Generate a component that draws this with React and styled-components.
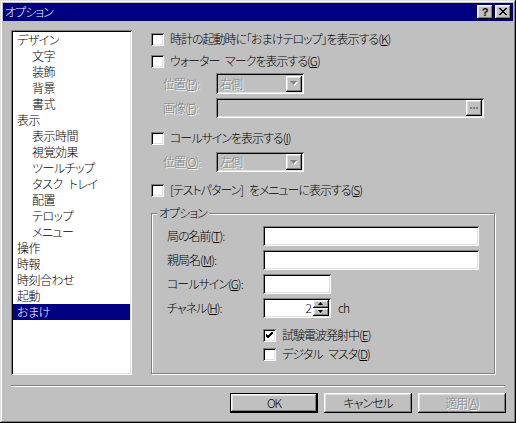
import React from 'react';
import styled, { createGlobalStyle, css } from 'styled-components';

const face = '#c0c0c0';
const shadow = '#808080';
const light = '#dfdfdf';
const navy = '#000080';

const GlobalStyle = createGlobalStyle`
  html, body {
    margin: 0;
    padding: 0;
    background: ${face};
  }
  body {
    font-family: "Noto Sans CJK JP", "Liberation Sans", sans-serif;
    font-size: 12px;
    font-weight: 300;
    line-height: 14px;
    letter-spacing: -1px;
    word-spacing: 4px;
    font-feature-settings: "palt";
    color: #000;
  }
  * { box-sizing: border-box; }
  u { text-underline-offset: 1px; }
`;

// win98 bevels
const raised = css`
  background: ${face};
  box-shadow: inset -1px -1px 0 #000, inset 1px 1px 0 #fff,
    inset -2px -2px 0 ${shadow}, inset 2px 2px 0 ${light};
`;

const sunken = css`
  box-shadow: inset 1px 1px 0 ${shadow}, inset -1px -1px 0 #fff,
    inset 2px 2px 0 #000, inset -2px -2px 0 ${light};
`;

const disabledText = css`
  color: ${shadow};
  text-shadow: 1px 1px 0 #fff;
`;

const Window = styled.div`
  display: flex;
  flex-direction: column;
  width: 516px;
  height: 423px;
  padding: 3px;
  background: ${face};
  box-shadow: inset -1px -1px 0 #000, inset 1px 1px 0 ${light},
    inset -2px -2px 0 ${shadow}, inset 2px 2px 0 #fff;
`;

const TitleBar = styled.div`
  display: flex;
  align-items: center;
  height: 18px;
  padding: 0 2px;
  background: ${navy};
  color: #fff;
`;

const TitleText = styled.div`
  flex: 1;
  font-size: 12px;
`;

const CaptionButton = styled.div`
  ${raised};
  display: flex;
  align-items: center;
  justify-content: center;
  width: 16px;
  height: 14px;
  margin-left: ${p => (p.$gap ? '2px' : '0')};
  color: #000;
  font-family: "Liberation Sans", sans-serif;
  font-weight: bold;
  font-size: 11px;
  line-height: 14px;
  letter-spacing: 0;
  padding-bottom: 1px;
`;

const Body = styled.div`
  display: flex;
  margin-top: 9px;
  padding: 0 8px;
`;

const ListBox = styled.div`
  ${sunken};
  width: 121px;
  height: 345px;
  padding: 2px;
  background: #fff;
`;

const ListItem = styled.div`
  height: 16px;
  line-height: 16px;
  padding-left: ${p => (p.$level ? '19px' : '4px')};
  white-space: nowrap;
  letter-spacing: -0.5px;
  background: ${p => (p.$selected ? navy : 'transparent')};
  color: ${p => (p.$selected ? '#fff' : '#000')};
`;

const Pane = styled.div`
  display: flex;
  flex-direction: column;
  width: 345px;
  margin-left: 19px;
`;

const CheckRow = styled.div`
  display: flex;
  align-items: center;
  gap: 6px;
  height: 16px;
  margin-top: ${p => p.$mt || 0}px;
  white-space: nowrap;
`;

const Box = styled.div`
  ${sunken};
  display: flex;
  align-items: center;
  justify-content: center;
  flex: none;
  width: 13px;
  height: 13px;
  background: #fff;
`;

const FieldRow = styled.div`
  display: flex;
  align-items: center;
  height: ${p => p.$h}px;
  margin-top: ${p => p.$mt || 0}px;
  padding-left: 12px;
`;

const FieldLabel = styled.div`
  width: ${p => p.$w || 53}px;
  white-space: nowrap;
  ${p => p.$disabled && disabledText};
`;

const Combo = styled.div`
  ${sunken};
  display: flex;
  align-items: center;
  width: ${p => p.$w}px;
  height: 100%;
  padding: 2px;
  background: ${face};
`;

const ComboText = styled.div`
  flex: 1;
  padding-left: 2px;
  ${disabledText};
`;

const SmallButton = styled.div`
  ${raised};
  display: flex;
  align-items: center;
  justify-content: center;
  width: ${p => p.$w || 16}px;
  height: ${p => p.$h || 16}px;
`;

const TextField = styled.div`
  ${sunken};
  display: flex;
  align-items: center;
  justify-content: flex-end;
  width: ${p => p.$w}px;
  height: 20px;
  padding: 2px;
  background: ${p => (p.$disabled ? face : '#fff')};
`;

const GroupBox = styled.div`
  position: relative;
  width: 344px;
  height: 161px;
  margin-top: 15px;
  padding: 12px 0 0 15px;
  border: 1px solid ${shadow};
  box-shadow: 1px 1px 0 #fff, inset 1px 1px 0 #fff;
`;

const GroupTitle = styled.div`
  position: absolute;
  top: -8px;
  left: 5px;
  padding: 0 2px;
  background: ${face};
`;

const GroupGrid = styled.div`
  display: grid;
  grid-template-columns: 96px auto;
  grid-auto-rows: 20px;
  row-gap: 4px;
  align-items: center;
  justify-items: start;
`;

const SpinWrap = styled.div`
  display: flex;
  align-items: center;
  gap: 7px;
`;

const SpinValue = styled.div`
  flex: 1;
  text-align: right;
  padding-right: 2px;
`;

const SpinButtons = styled.div`
  display: flex;
  flex-direction: column;
`;

const CheckStack = styled.div`
  display: flex;
  flex-direction: column;
  gap: 3px;
  margin-top: 9px;
  padding-left: 96px;
`;

const Separator = styled.div`
  height: 2px;
  margin: 10px 8px 0;
  border-top: 1px solid ${shadow};
  border-bottom: 1px solid #fff;
`;

const ButtonBar = styled.div`
  display: flex;
  justify-content: flex-end;
  gap: 6px;
  margin-top: 6px;
  padding-right: 7px;
`;

const PushButton = styled.div`
  ${raised};
  display: flex;
  align-items: center;
  justify-content: center;
  width: 88px;
  height: 20px;
  ${p => p.$default && css`
    border: 1px solid #000;
  `};
  ${p => p.$disabled && disabledText};
`;

const Check = ({ checked }) => (
  <Box>
    {checked && (
      <svg width="7" height="7" viewBox="0 0 7 7">
        <path d="M0 2 L2 4 L7 -1 M0 3 L2 5 L7 0 M0 4 L2 6 L7 1" stroke="#000" strokeWidth="1" fill="none" shapeRendering="crispEdges" />
      </svg>
    )}
  </Box>
);

const Arrow = ({ up, disabled, w = 7 }) => {
  const h = Math.ceil(w / 2);
  const pts = up ? `0,${h} ${w},${h} ${w / 2},0` : `0,0 ${w},0 ${w / 2},${h}`;
  return (
    <svg width={w + 1} height={h + 1} viewBox={`0 0 ${w + 1} ${h + 1}`}>
      {disabled && <polygon points={pts} fill="#fff" transform="translate(1 1)" />}
      <polygon points={pts} fill={disabled ? shadow : '#000'} />
    </svg>
  );
};

const DisabledCombo = ({ value, w }) => (
  <Combo $w={w}>
    <ComboText>{value}</ComboText>
    <SmallButton>
      <Arrow disabled />
    </SmallButton>
  </Combo>
);

const treeItems = [
  ['デザイン', 0], ['文字', 1], ['装飾', 1], ['背景', 1], ['書式', 1],
  ['表示', 0], ['表示時間', 1], ['視覚効果', 1], ['ツールチップ', 1], ['タスク トレイ', 1],
  ['配置', 1], ['テロップ', 1], ['メニュー', 1],
  ['操作', 0], ['時報', 0], ['時刻合わせ', 0], ['起動', 0], ['おまけ', 0],
];

export default function App() {
  return (
    <>
      <GlobalStyle />
      <Window>
        <TitleBar>
          <TitleText>オプション</TitleText>
          <CaptionButton>?</CaptionButton>
          <CaptionButton $gap>
            <svg width="8" height="7" viewBox="0 0 8 7">
              <path d="M0 0 L7 7 M1 0 L8 7 M7 0 L0 7 M8 0 L1 7" stroke="#000" strokeWidth="1" shapeRendering="crispEdges" />
            </svg>
          </CaptionButton>
        </TitleBar>

        <Body>
          <ListBox>
            {treeItems.map(([label, level]) => (
              <ListItem key={label} $level={level} $selected={label === 'おまけ'}>{label}</ListItem>
            ))}
          </ListBox>

          <Pane>
            <CheckRow $mt={1}>
              <Check />
              <span>時計の起動時に「おまけテロップ」を表示する(<u>K</u>)</span>
            </CheckRow>
            <CheckRow $mt={6}>
              <Check />
              <span>ウォーター マークを表示する(<u>G</u>)</span>
            </CheckRow>
            <FieldRow $h={21} $mt={4}>
              <FieldLabel $disabled>位置(<u>P</u>):</FieldLabel>
              <DisabledCombo value="右側" w={88} />
            </FieldRow>
            <FieldRow $h={20} $mt={4}>
              <FieldLabel $disabled>画像(<u>F</u>):</FieldLabel>
              <TextField $w={268} $disabled>
                <SmallButton $w={16} $h={16}>
                  <svg width="9" height="3" viewBox="0 0 9 3">
                    <rect x="0" y="0" width="2" height="2" fill={shadow} />
                    <rect x="3" y="0" width="2" height="2" fill={shadow} />
                    <rect x="6" y="0" width="2" height="2" fill={shadow} />
                  </svg>
                </SmallButton>
              </TextField>
            </FieldRow>
            <CheckRow $mt={12}>
              <Check />
              <span>コールサインを表示する(<u>I</u>)</span>
            </CheckRow>
            <FieldRow $h={20} $mt={6}>
              <FieldLabel $disabled>位置(<u>O</u>):</FieldLabel>
              <DisabledCombo value="左側" w={88} />
            </FieldRow>
            <CheckRow $mt={10}>
              <Check />
              <span>[テストパターン] をメニューに表示する(<u>S</u>)</span>
            </CheckRow>

            <GroupBox>
              <GroupTitle>オプション</GroupTitle>
              <GroupGrid>
                <span>局の名前(<u>T</u>):</span>
                <TextField $w={216} />
                <span>親局名(<u>M</u>):</span>
                <TextField $w={216} />
                <span>コールサイン(<u>G</u>):</span>
                <TextField $w={68} />
                <span>チャネル(<u>H</u>):</span>
                <SpinWrap>
                  <TextField $w={68}>
                    <SpinValue>2</SpinValue>
                    <SpinButtons>
                      <SmallButton $w={16} $h={8}><Arrow up w={5} /></SmallButton>
                      <SmallButton $w={16} $h={8}><Arrow w={5} /></SmallButton>
                    </SpinButtons>
                  </TextField>
                  <span>ch</span>
                </SpinWrap>
              </GroupGrid>
              <CheckStack>
                <CheckRow>
                  <Check checked />
                  <span>試験電波発射中(<u>E</u>)</span>
                </CheckRow>
                <CheckRow>
                  <Check />
                  <span>デジタル マスタ(<u>D</u>)</span>
                </CheckRow>
              </CheckStack>
            </GroupBox>
          </Pane>
        </Body>

        <Separator />
        <ButtonBar>
          <PushButton $default>OK</PushButton>
          <PushButton>キャンセル</PushButton>
          <PushButton $disabled>適用(<u>A</u>)</PushButton>
        </ButtonBar>
      </Window>
    </>
  );
}
